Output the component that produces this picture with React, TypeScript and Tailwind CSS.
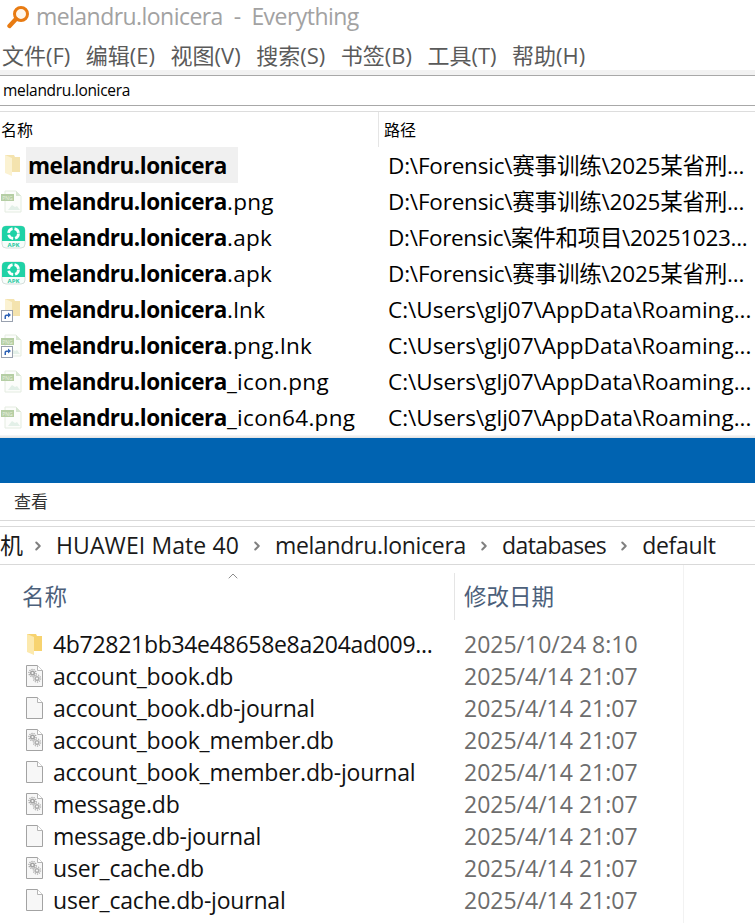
import { ChevronRight, ChevronUp } from "lucide-react";

const FONT = "font-['Open_Sans','Noto_Sans_CJK_SC',sans-serif]";

const FolderIcon = ({ pale }: { pale?: boolean }) => (
  <svg width="15" height="21" viewBox="0 0 15 21">
    <path d="M0 0h9l1 2h5v15H0z" fill={pale ? "#f4e3ae" : "#f7d36f"} />
    <path d="M0 0l7 3v18l-7-3z" fill={pale ? "#fbf2d2" : "#fce9ad"} />
  </svg>
);

const PngIcon = () => (
  <svg width="21" height="23" viewBox="0 0 21 23">
    <path d="M4 1h11l5 5v16H4z" fill="#fcfdfb" stroke="#e4ece1" />
    <path d="M15 1v5h5z" fill="#d8e6d2" />
    <rect x="0" y="4" width="13" height="7" fill="#b5cea4" />
    <text x="6.5" y="9.5" fontSize="5" textAnchor="middle" fill="#e9f2e2">PNG</text>
    <path d="M7 20l4-5 3 2 2-1 3 4z" fill="#e3f0e8" />
  </svg>
);

const ApkIcon = () => (
  <svg width="25" height="24" viewBox="0 0 25 24">
    <rect x="1" y="1" width="23" height="22" rx="4" fill="#f6fdfb" stroke="#d5dedb" />
    <path d="M1 16V5a4 4 0 0 1 4-4h15a4 4 0 0 1 4 4v11z" fill="#1fd2a6" />
    <circle cx="12.5" cy="8.5" r="5" fill="none" stroke="#fff" strokeWidth="2.8" strokeDasharray="6 2" />
    <text x="12.5" y="21.5" fontSize="6" textAnchor="middle" fill="#1fc79d" fontWeight="700">APK</text>
  </svg>
);

const Shortcut = () => (
  <div className="absolute left-0 bottom-0 w-[12px] h-[12px] bg-white border border-gray-400 flex items-center justify-center">
    <svg width="9" height="9" viewBox="0 0 9 9">
      <path d="M1.5 8V5.5C1.5 4 2.5 3.5 4 3.5h1V1.5L8 4 5 6.5V5H4C3.2 5 3 5.4 3 6v2z" fill="#2f63b5" />
    </svg>
  </div>
);

const DocShape = () => (
  <>
    <path d="M0.5 0.5h11l5 5v16h-16z" fill="#f7f7f7" stroke="#a3a3a3" />
    <path d="M11.5 0.5v5h5" fill="#fff" stroke="#b5b5b5" />
  </>
);

const Gear = ({ cx, cy, r, color }: { cx: number; cy: number; r: number; color: string }) => (
  <>
    <circle cx={cx} cy={cy} r={r} fill={color} />
    <circle cx={cx} cy={cy} r={r + 1} fill="none" stroke={color} strokeWidth="1.2" strokeDasharray="1.2 1" />
    <circle cx={cx} cy={cy} r={r * 0.4} fill="#f7f7f7" />
  </>
);

const DbIcon = () => (
  <svg width="17" height="22" viewBox="0 0 17 22">
    <DocShape />
    <Gear cx={6.5} cy={8} r={2.6} color="#a2a2a2" />
    <Gear cx={11} cy={13.5} r={2.6} color="#b0b0b0" />
  </svg>
);

const BlankIcon = () => (
  <svg width="17" height="22" viewBox="0 0 17 22">
    <DocShape />
  </svg>
);

const results = [
  { icon: "folder", rest: "", path: "D:\\Forensic\\赛事训练\\2025某省刑...", pathClass: "tracking-[-0.2px]" },
  { icon: "png", rest: ".png", path: "D:\\Forensic\\赛事训练\\2025某省刑...", pathClass: "tracking-[-0.2px]" },
  { icon: "apk", rest: ".apk", path: "D:\\Forensic\\案件和项目\\20251023...", pathClass: "tracking-[-0.3px]" },
  { icon: "apk", rest: ".apk", path: "D:\\Forensic\\赛事训练\\2025某省刑...", pathClass: "tracking-[-0.2px]" },
  { icon: "folderlink", rest: ".lnk", path: "C:\\Users\\glj07\\AppData\\Roaming...", pathClass: "tracking-[0px]" },
  { icon: "pnglink", rest: ".png.lnk", path: "C:\\Users\\glj07\\AppData\\Roaming...", pathClass: "tracking-[0px]" },
  { icon: "png", rest: "_icon.png", path: "C:\\Users\\glj07\\AppData\\Roaming...", pathClass: "tracking-[0px]" },
  { icon: "png", rest: "_icon64.png", path: "C:\\Users\\glj07\\AppData\\Roaming...", pathClass: "tracking-[0px]" },
];

const files = [
  { db: true, name: "account_book.db" },
  { db: false, name: "account_book.db-journal" },
  { db: true, name: "account_book_member.db" },
  { db: false, name: "account_book_member.db-journal" },
  { db: true, name: "message.db" },
  { db: false, name: "message.db-journal" },
  { db: true, name: "user_cache.db" },
  { db: false, name: "user_cache.db-journal" },
];

const menus = ["文件(F)", "编辑(E)", "视图(V)", "搜索(S)", "书签(B)", "工具(T)", "帮助(H)"];

const ResultIcon = ({ kind }: { kind: string }) => {
  if (kind === "apk") return <ApkIcon />;
  const isPng = kind.startsWith("png");
  return (
    <div className={`relative w-[25px] h-[25px] flex items-center ${isPng ? "pl-[0px]" : "pl-[4px]"}`}>
      {isPng ? <PngIcon /> : <FolderIcon pale />}
      {kind.endsWith("link") && <Shortcut />}
    </div>
  );
};

const Crumb = () => <ChevronRight size={14} strokeWidth={3.5} className="text-[#808080] mx-[11px]" />;

export default function App() {
  return (
    <div className={`${FONT} w-[755px] h-[923px] overflow-hidden bg-white flex flex-col text-black`}>
      {/* Everything window */}
      <div className="h-[34px] flex items-center pl-[7px] gap-[6px]">
        <svg width="23" height="24" viewBox="0 0 23 24">
          <circle cx="14" cy="9" r="6.5" fill="#fff6ea" stroke="#e87b12" strokeWidth="3" />
          <path d="M9 14L2.5 21" stroke="#e87b12" strokeWidth="4.4" strokeLinecap="round" />
        </svg>
        <span className="text-[23px] text-[#a2a2a2] tracking-[-0.55px] whitespace-pre pb-[2px]">melandru.lonicera  -  Everything</span>
      </div>
      <div className="h-[36px] flex items-center pt-[6px] pl-[2px] gap-[15.5px] text-[22px] text-[#5a5a5a]">
        {menus.map((m) => (
          <span key={m}>{m}</span>
        ))}
      </div>
      <div className="h-[5px] bg-[#f2f2f2]" />
      <div className="h-[31px] border-y border-[#a8a8a8] flex items-center pl-[3px] text-[15.5px] tracking-[-0.3px]">melandru.lonicera</div>
      <div className="h-[6px] border-b border-[#dddddd]" />
      <div className="h-[35px] flex text-[16px]">
        <div className="w-[378px] pl-[1px] flex items-center">名称</div>
        <div className="border-l border-[#e5e5e5] pl-[5px] flex items-center">路径</div>
      </div>
      <div className="flex flex-col">
        {results.map((r, i) => (
          <div key={i} className="h-[36px] flex items-center text-[22.5px] whitespace-nowrap">
            <div className="w-[378px] flex items-center pl-[1px]">
              <ResultIcon kind={r.icon} />
              <div className={`pl-[2px] pr-[11px] pt-[2px] h-[36px] flex items-center ${i === 0 ? "bg-[#f0f0f0]" : ""}`}>
                <span className="tracking-[-0.5px]">
                  <b className="font-bold">melandru.lonicera</b>
                  <span className="tracking-[0.3px]">{r.rest}</span>
                </span>
              </div>
            </div>
            <div className={`pl-[10px] pt-[2px] ${r.pathClass}`}>{r.path}</div>
          </div>
        ))}
      </div>
      <div className="h-[3px] bg-gradient-to-b from-[#f8f8f8] to-[#e2e2e2]" />

      {/* Blue band between the two windows */}
      <div className="h-[45px] bg-[#0063b1]" />

      {/* Explorer window */}
      <div className="h-[38px] border-b border-[#d9d9d9] flex items-center pl-[14px] text-[17px] text-[#333333]">查看</div>
      <div className="h-[5px]" />
      <div className="h-[39px] border-y border-[#d9d9d9] flex items-center text-[23px] tracking-[-0.3px] text-[#1a1a1a] whitespace-nowrap">
        <span className="w-[20px]">机</span>
        <Crumb />
        <span className="tracking-[0.1px]">HUAWEI Mate 40</span>
        <Crumb />
        <span>melandru.lonicera</span>
        <Crumb />
        <span className="tracking-[-0.6px]">databases</span>
        <Crumb />
        <span>default</span>
      </div>
      <div className="w-[684px] border-r border-[#f2f2f2] flex-1 flex flex-col">
        <div className="relative h-[55px] flex pt-[8px] text-[22.5px] text-[#4c607a]">
          <ChevronUp size={16} strokeWidth={1.2} className="absolute left-[225px] top-[3px] text-[#707070]" />
          <div className="w-[455px] pl-[22px] flex items-center border-r border-[#e5e5e5]">名称</div>
          <div className="pl-[9px] flex items-center">修改日期</div>
        </div>
        <div className="flex flex-col pt-[8px] text-[23px] whitespace-nowrap">
          <div className="h-[32px] flex items-center">
            <div className="w-[464px] flex items-center pl-[27px] gap-[11px]">
              <FolderIcon />
              <span className="tracking-[-0.3px] text-[#111111]">4b72821bb34e48658e8a204ad009...</span>
            </div>
            <span className="text-[#6d6d6d]">2025/10/24 8:10</span>
          </div>
          {files.map((f) => (
            <div key={f.name} className="h-[32px] flex items-center">
              <div className="w-[464px] flex items-center pl-[26px] gap-[10px]">
                {f.db ? <DbIcon /> : <BlankIcon />}
                <span className="tracking-[-0.2px] text-[#111111]">{f.name}</span>
              </div>
              <span className="text-[#6d6d6d]">2025/4/14 21:07</span>
            </div>
          ))}
        </div>
      </div>
    </div>
  );
}
